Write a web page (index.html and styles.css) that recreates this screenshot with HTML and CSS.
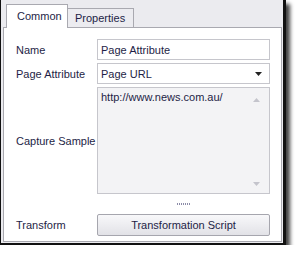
FILE: index.html
```html
<!DOCTYPE html>
<html lang="en">
<head>
  <meta charset="UTF-8" />
  <title>Capture Settings</title>
  <link rel="stylesheet" href="styles.css">
</head>
<body>

  <div id="frame">
    <div class="tabs">
      <div class="tab active">Common</div>
      <div class="tab">Properties</div>
    </div>

    <div class="panel">
      <label class="lbl">Name</label>
      <div class="field">Page Attribute</div>

      <label class="lbl">Page Attribute</label>
      <div class="field select">
        <span>Page URL</span>
        <svg width="7" height="4" viewBox="0 0 7 4"><path d="M0 0H7L3.5 4Z" fill="#222"/></svg>
      </div>

      <label class="lbl sample">Capture Sample</label>
      <div class="memo">
        <span>http://www.news.com.au/</span>
        <div class="scroll">
          <svg width="7" height="4" viewBox="0 0 7 4"><path d="M0 4H7L3.5 0Z" fill="#c4c4cc"/></svg>
          <svg width="7" height="4" viewBox="0 0 7 4"><path d="M0 0H7L3.5 4Z" fill="#c4c4cc"/></svg>
        </div>
      </div>

      <div></div>
      <div class="grip"></div>

      <label class="lbl">Transform</label>
      <button class="btn">Transformation Script</button>
    </div>
  </div>

</body>
</html>
```

FILE: styles.css
```css
* {
  box-sizing: border-box;
}

body {
  margin: 0;
  background: #fff;
  font-family: 'Liberation Sans', Arial, sans-serif;
  font-size: 11px;
  color: #1e1e46;
}

#frame {
  width: 286px;
  height: 245px;
  background: #ebebef;
  border-left: 1px solid #111;
  border-right: 3px solid #111;
  border-bottom: 2px solid #111;
  box-shadow: 4px 4px 4px rgba(0,0,0,0.75);
  padding: 0 1px 1px 2px;
  display: flex;
  flex-direction: column;
}

.tabs {
  display: flex;
  align-items: flex-end;
  height: 28px;
  padding-left: 3px;
  margin-bottom: -1px;
}

.tab {
  height: 19px;
  width: 66px;
  border: 1px solid #a9a9b0;
  border-bottom: none;
  border-left: none;
  background: #ececf0;
  padding: 3px 0 0 7px;
  margin-bottom: 1px;
}

.tab.active {
  width: 62px;
  height: 24px;
  background: #fff;
  border-left: 1px solid #a9a9b0;
  padding: 5px 0 0 10px;
  margin-bottom: 0;
  position: relative;
}

.panel {
  flex: 1;
  background: #fff;
  border: 1px solid #a9a9b0;
  padding: 11px 0 0 12px;
  display: grid;
  grid-template-columns: 81px 173px;
  grid-template-rows: 21px 21px 107px 14px 22px;
  row-gap: 3px;
  align-content: start;
}

.lbl {
  display: flex;
  align-items: center;
}

.field {
  border: 1px solid #c6c6cc;
  padding: 0 3px;
  display: flex;
  align-items: center;
  justify-content: space-between;
}

.select svg {
  margin-right: 4px;
}

.memo {
  background: #f3f3f5;
  border: 1px solid #c6c6cc;
  padding: 3px 3px;
  display: flex;
  justify-content: space-between;
}

.scroll {
  display: flex;
  flex-direction: column;
  justify-content: space-between;
  padding: 7px 6px 4px 0;
}

.grip {
  justify-self: center;
  align-self: center;
  width: 13px;
  height: 2px;
  margin-top: -1px;
  background: repeating-linear-gradient(90deg, #8c8ca8 0 1px, transparent 1px 2px);
}

.btn {
  font: inherit;
  color: inherit;
  border: 1px solid #a6a6ae;
  border-radius: 2px;
  background: linear-gradient(#f8f8fa, #e2e2e7);
  padding: 0;
}
```
